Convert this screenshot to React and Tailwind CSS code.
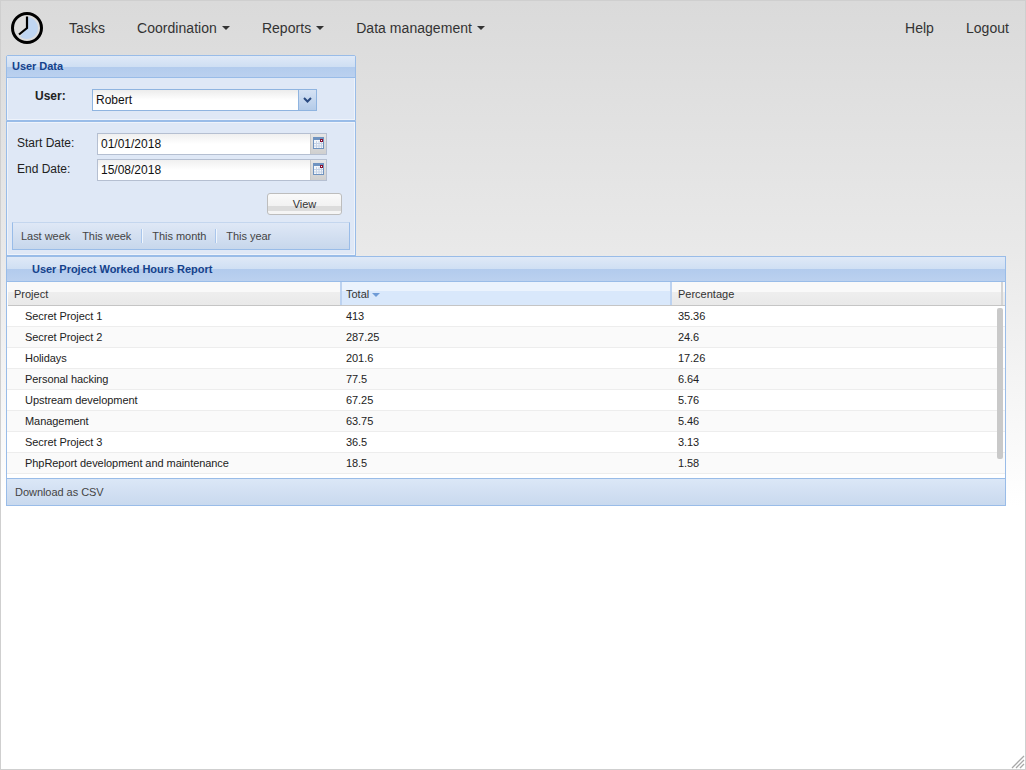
import React from 'react';

const rows = [
  ['Secret Project 1', '413', '35.36'],
  ['Secret Project 2', '287.25', '24.6'],
  ['Holidays', '201.6', '17.26'],
  ['Personal hacking', '77.5', '6.64'],
  ['Upstream development', '67.25', '5.76'],
  ['Management', '63.75', '5.46'],
  ['Secret Project 3', '36.5', '3.13'],
  ['PhpReport development and maintenance', '18.5', '1.58'],
];

const Logo = () => (
  <svg width="34" height="34" viewBox="0 0 34 34" className="shrink-0">
    <circle cx="17" cy="17" r="14.5" fill="#dedede" stroke="#000" strokeWidth="3" />
    <path d="M17 17 L17 6 A11 11 0 1 1 10.1 25.6 Z" fill="#c0d6f2" />
    <path d="M17 5.5 L17 17 L9 23.5" fill="none" stroke="#000" strokeWidth="2.2" />
  </svg>
);

const Caret = () => (
  <span className="ml-[5px] inline-block h-0 w-0 border-x-[4px] border-t-[4px] border-x-transparent border-t-[#333] align-middle" />
);

const NavItem = ({ children, caret }) => (
  <span className="flex items-center whitespace-nowrap text-[14px] leading-5 tracking-[0.04px] text-[#333]">
    {children}
    {caret && <Caret />}
  </span>
);

const CalendarIcon = () => (
  <svg width="11" height="12" viewBox="0 0 11 12">
    <rect x="0.5" y="0.5" width="10" height="11" fill="#f4f7fb" stroke="#6f93c0" />
    <rect x="1" y="1" width="9" height="2" fill="#6f93c0" />
    <path d="M1 6.5h9M1 9h9M3.5 4v7M6 4v7M8.5 4v7" stroke="#c4d2e6" strokeWidth="1" />
    <rect x="7.5" y="2.5" width="2" height="2" fill="#fff" stroke="#8a1030" />
  </svg>
);

const DateField = ({ label, value }) => (
  <div className="flex h-[22px] items-start">
    <label className="w-[80px] pt-[1px] text-[12px] leading-[18px] text-[#222]">{label}</label>
    <div className="flex h-[22px] w-[230px] border border-[#b5bfd1]">
      <div className="flex-1 bg-gradient-to-b from-[#f0f0f0] via-white to-white pl-[3px] text-[12px] leading-[20px] text-[#111]">
        {value}
      </div>
      <div className="flex w-[16px] items-start justify-center border-l border-[#c8c8c8] bg-gradient-to-b from-[#e6e6e6] to-[#cfcfcf] pt-[3px]">
        <CalendarIcon />
      </div>
    </div>
  </div>
);

const PanelHeader = ({ children, height, pad }) => (
  <div
    className={`${height} ${pad} border-b border-[#99bce8] bg-[linear-gradient(to_bottom,#dfe9f7_0%,#cfdff3_50%,#b2cbed_50%,#bbd1ef_100%)] text-[11px] font-bold tracking-[-0.03px] text-[#15428b]`}
  >
    {children}
  </div>
);

const HeaderCell = ({ children, active, className }) => (
  <div
    className={`${className} flex h-full items-center pt-[2px] text-[11px] ${
      active
        ? 'border-x-2 border-[#bcd2f0] bg-[linear-gradient(to_bottom,#ebf3fd_0%,#ebf3fd_40%,#d9e8fb_40%,#d9e8fb_100%)] pl-[4px]'
        : 'pl-[6px]'
    }`}
  >
    {children}
  </div>
);

export default function App() {
  return (
    <div
      className="relative h-[770px] w-[1026px] overflow-hidden border border-[#cfcfcf] bg-[linear-gradient(to_bottom,#dadada_0px,#e9e9e9_250px,#ffffff_505px)] text-[#222]"
      style={{ fontFamily: '"Liberation Sans", Arial, sans-serif' }}
    >
      <nav className="flex h-[54px] items-center pl-[9px] pr-[16px]">
        <Logo />
        <div className="ml-[25px] flex items-center gap-8">
          <NavItem>Tasks</NavItem>
          <NavItem caret>Coordination</NavItem>
          <NavItem caret>Reports</NavItem>
          <NavItem caret>Data management</NavItem>
        </div>
        <div className="ml-auto flex items-center gap-8">
          <NavItem>Help</NavItem>
          <NavItem>Logout</NavItem>
        </div>
      </nav>

      <div className="pl-[5px]">
        {/* User data panel */}
        <div className="h-[66px] w-[350px] rounded-t-[2px] border border-[#99bce8] bg-[#dfe8f6] shadow-[inset_0_0_0_1px_#eef3fb]">
          <PanelHeader height="h-[22px]" pad="pl-[5px] leading-[20px]">User Data</PanelHeader>
          <div className="flex items-start pl-[28px] pt-[11px]">
            <label className="w-[57px] text-[12px] font-bold leading-[14px] text-[#222]">User:</label>
            <div className="flex h-[22px] w-[225px] border border-[#8fb4e0]">
              <div className="flex-1 bg-gradient-to-b from-[#ececec] via-white to-white pl-[3px] text-[12px] leading-[20px] text-[#111]">
                Robert
              </div>
              <div className="flex w-[18px] items-center justify-center border-l border-[#8fb4e0] bg-gradient-to-b from-[#d5e2f4] to-[#b4cbe8]">
                <svg width="9" height="6" viewBox="0 0 9 6">
                  <path d="M1 1 L4.5 4.5 L8 1" fill="none" stroke="#2a4a80" strokeWidth="2" />
                </svg>
              </div>
            </div>
          </div>
        </div>

        {/* Date range panel */}
        <div className="h-[135px] w-[350px] border border-[#99bce8] bg-[#dfe8f6] pt-[11px] shadow-[inset_0_0_0_1px_#eef3fb]">
          <div className="flex flex-col gap-[4px] pl-[10px]">
            <DateField label="Start Date:" value="01/01/2018" />
            <DateField label="End Date:" value="15/08/2018" />
          </div>
          <div className="mt-[12px] flex justify-end pr-[13px]">
            <button className="h-[22px] w-[75px] rounded-[3px] border border-[#bdbdbd] bg-[linear-gradient(to_bottom,#fafafa_0%,#f2f2f2_60%,#dcdcdc_60%,#dcdcdc_85%,#f5f5f5_85%)] text-[11px] leading-[20px] text-[#333]">
              View
            </button>
          </div>
          <div className="mx-[5px] mt-[7px] flex h-[28px] w-[338px] items-center border border-[#99bce8] border-t-[#c4d6ee] bg-gradient-to-b from-[#dfe8f6] to-[#c7d7ec] pl-[8px] text-[11px] tracking-[-0.04px] text-[#444]">
            <span>Last week</span>
            <span className="ml-[12px]">This week</span>
            <span className="ml-[10px] mr-[9px] h-[14px] w-[2px] border-l border-[#a9c6ec] bg-[#f0f6fd]" />
            <span>This month</span>
            <span className="mx-[9px] h-[14px] w-[2px] border-l border-[#a9c6ec] bg-[#f0f6fd]" />
            <span>This year</span>
          </div>
        </div>

        {/* Report grid */}
        <div className="relative h-[250px] w-[1000px] border border-[#99bce8] bg-white">
          <PanelHeader height="h-[25px]" pad="pl-[25px] leading-[24px]">User Project Worked Hours Report</PanelHeader>
          <div className="bg-white pl-[1px]">
            <div className="flex h-[24px] border-b border-[#c5c5c5] bg-[linear-gradient(to_bottom,#f9f9f9_0%,#f9f9f9_45%,#eeeeee_45%,#e9e9e9_100%)] text-[#333]">
              <HeaderCell className="w-[332px]">Project</HeaderCell>
              <HeaderCell active className="w-[332px]">
                Total
                <span className="ml-[3px] mt-[1px] h-0 w-0 border-x-[4px] border-t-[4px] border-x-transparent border-t-[#6f9bd6]" />
              </HeaderCell>
              <HeaderCell className="w-[331px] border-r-2 border-[#d4d4d4]">Percentage</HeaderCell>
            </div>
          </div>
          <div className="h-[172px]">
            {rows.map((row, i) => (
              <div
                key={row[0]}
                className={`flex h-[21px] items-center border-b border-[#ededed] text-[11px] tracking-[-0.06px] text-[#222] ${
                  i % 2 === 1 ? 'bg-[#fafafa]' : 'bg-white'
                }`}
              >
                <div className="w-[333px] pl-[18px]">{row[0]}</div>
                <div className="w-[332px] pl-[6px]">{row[1]}</div>
                <div className="pl-[6px]">{row[2]}</div>
              </div>
            ))}
          </div>
          <div className="flex h-[27px] items-center border-t border-[#99bce8] bg-gradient-to-b from-[#dbe7f7] to-[#c9d9ee] pl-[8px] text-[11px] tracking-[-0.04px] text-[#444]">
            Download as CSV
          </div>
          {/* scrollbar thumb */}
          <div className="absolute left-[990px] top-[51px] h-[151px] w-[6px] rounded-[2px] bg-[#c9c9c9]" />
        </div>
      </div>

      {/* window resize grip */}
      <svg className="absolute bottom-0 right-0" width="14" height="14" viewBox="0 0 14 14">
        <path d="M1 13 L13 1 M5 13 L13 5 M9 13 L13 9" stroke="#a8a8a8" strokeWidth="1.3" fill="none" />
      </svg>
    </div>
  );
}
